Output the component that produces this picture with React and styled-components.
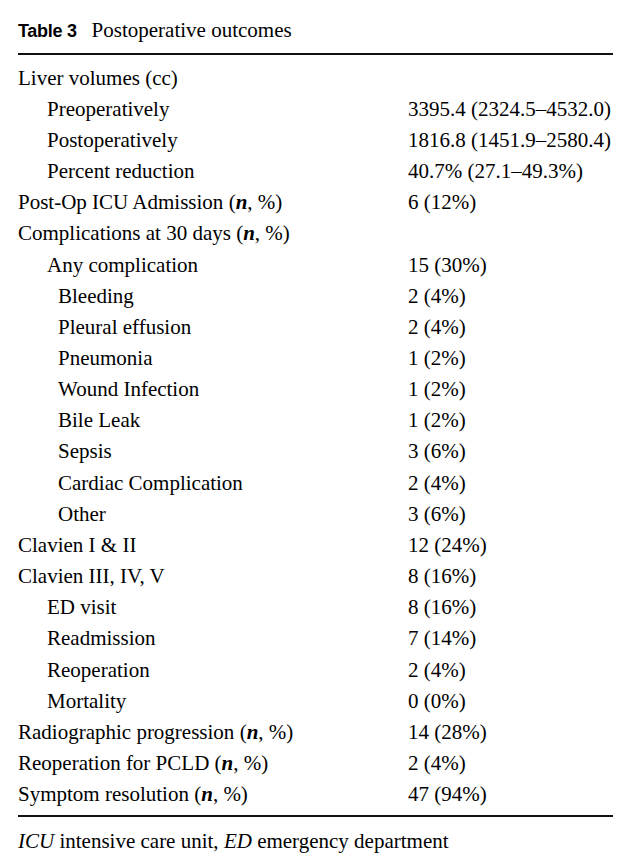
import React from 'react';
import styled, { createGlobalStyle } from 'styled-components';

const GlobalStyle = createGlobalStyle`
  body {
    margin: 0;
    background: #fff;
  }
`;

const Page = styled.div`
  width: 595px;
  padding: 18px 0 0 18px;
  font-family: "Liberation Serif", "Times New Roman", serif;
  color: #000;
`;

const Caption = styled.div`
  display: flex;
  align-items: baseline;
  gap: 15px;
  height: 27px;
  font-size: 21px;
`;

const CaptionLabel = styled.span`
  font-family: "Liberation Sans", Arial, sans-serif;
  font-weight: bold;
  font-size: 18px;
  letter-spacing: -0.3px;
`;

const Rule = styled.div`
  height: 1.5px;
  background: #111;
  margin: ${(p) => p.$margin};
`;

const Rows = styled.div`
  display: flex;
  flex-direction: column;
`;

const Row = styled.div`
  display: grid;
  grid-template-columns: 390px 1fr;
  height: 31.17px;
  align-items: center;
  font-size: 21px;
  white-space: nowrap;
`;

const Label = styled.div`
  padding-left: ${(p) => p.$indent}px;
`;

const N = styled.i`
  font-weight: bold;
`;

const Footnote = styled.div`
  font-size: 21px;
  padding-top: 12px;
`;

const nP = (
  <>
    {' ('}
    <N>n</N>
    {', %)'}
  </>
);

const data = [
  ['Liver volumes (cc)', '', 0],
  ['Preoperatively', '3395.4 (2324.5–4532.0)', 29],
  ['Postoperatively', '1816.8 (1451.9–2580.4)', 29],
  ['Percent reduction', '40.7% (27.1–49.3%)', 29],
  [<>Post-Op ICU Admission{nP}</>, '6 (12%)', 0],
  [<>Complications at 30 days{nP}</>, '', 0],
  ['Any complication', '15 (30%)', 29],
  ['Bleeding', '2 (4%)', 40],
  ['Pleural effusion', '2 (4%)', 40],
  ['Pneumonia', '1 (2%)', 40],
  ['Wound Infection', '1 (2%)', 40],
  ['Bile Leak', '1 (2%)', 40],
  ['Sepsis', '3 (6%)', 40],
  ['Cardiac Complication', '2 (4%)', 40],
  ['Other', '3 (6%)', 40],
  ['Clavien I & II', '12 (24%)', 0],
  ['Clavien III, IV, V', '8 (16%)', 0],
  ['ED visit', '8 (16%)', 29],
  ['Readmission', '7 (14%)', 29],
  ['Reoperation', '2 (4%)', 29],
  ['Mortality', '0 (0%)', 29],
  [<>Radiographic progression{nP}</>, '14 (28%)', 0],
  [<>Reoperation for PCLD{nP}</>, '2 (4%)', 0],
  [<>Symptom resolution{nP}</>, '47 (94%)', 0],
];

export default function App() {
  return (
    <Page>
      <GlobalStyle />
      <Caption>
        <CaptionLabel>Table 3</CaptionLabel>
        <span>Postoperative outcomes</span>
      </Caption>
      <Rule $margin="8px 0 8px" />
      <Rows>
        {data.map(([label, value, indent], i) => (
          <Row key={i}>
            <Label $indent={indent}>{label}</Label>
            <div>{value}</div>
          </Row>
        ))}
      </Rows>
      <Rule $margin="5px 0 0" />
      <Footnote>
        <i>ICU</i> intensive care unit, <i>ED</i> emergency department
      </Footnote>
    </Page>
  );
}
